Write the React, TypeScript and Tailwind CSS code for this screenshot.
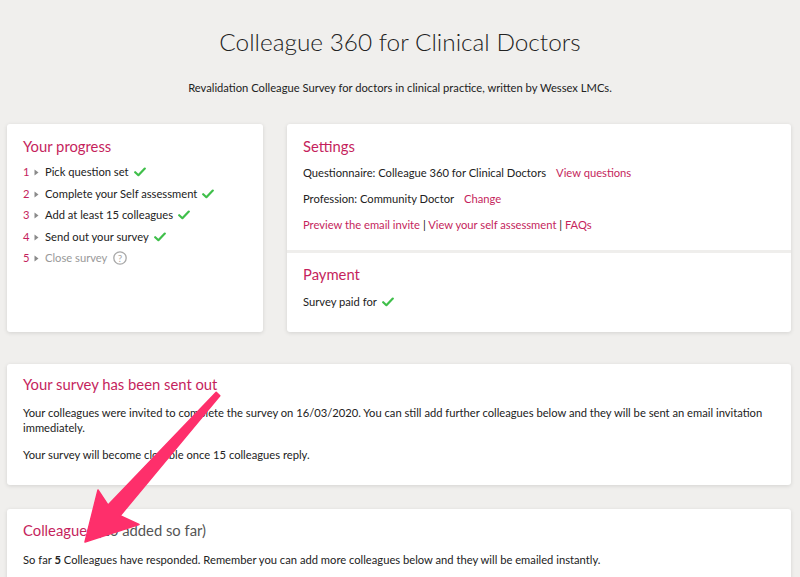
import React from "react";

const Check = () => (
  <svg width="12" height="10" viewBox="0 0 12 10" className="inline-block ml-[5px] align-[-1px]">
    <path d="M1.2 5.2 L4.4 8.2 L10.8 1.6" fill="none" stroke="#3fbf4a" strokeWidth="2.2" strokeLinecap="round" strokeLinejoin="round" />
  </svg>
);

const Tri = () => (
  <svg width="5" height="7" viewBox="0 0 5 7" className="inline-block ml-[5px] mr-[6px] align-[0px]">
    <path d="M0.5 0.5 L4.5 3.5 L0.5 6.5 Z" fill="#8a8a8a" />
  </svg>
);

const Help = () => (
  <svg width="14" height="14" viewBox="0 0 14 14" className="inline-block ml-[6px] align-[-3px]">
    <circle cx="7" cy="7" r="6.2" fill="none" stroke="#a8a8a8" strokeWidth="1.3" />
    <text x="7" y="10.6" textAnchor="middle" fontSize="10" fill="#a8a8a8" fontFamily="Lato, sans-serif">?</text>
  </svg>
);

const Step = ({ n, text, done, muted }: { n: number; text: string; done?: boolean; muted?: boolean }) => (
  <div className="leading-[21.5px] whitespace-nowrap">
    <span className="text-[#c51f5d] inline-block w-[6px]">{n}</span>
    <Tri />
    <span className={muted ? "text-[#999999]" : "text-[#222222]"}>{text}</span>
    {done && <Check />}
    {muted && <Help />}
  </div>
);

export default function App() {
  return (
    <div className="relative min-h-[577px] bg-[#f0efed] text-[#222222] overflow-hidden" style={{ fontFamily: "Lato, 'Noto Sans', sans-serif" }}>
      <div className="h-[124px] flex flex-col items-center">
        <h1 className="mt-[26px] text-[24.4px] leading-[32px] font-light text-[#222222]">Colleague 360 for Clinical Doctors</h1>
        <p className="mt-[22px] text-[11.2px] leading-[16px] text-[#222222]">
          Revalidation Colleague Survey for doctors in clinical practice, written by Wessex LMCs.
        </p>
      </div>

      <div className="pl-[7px] pr-[9px]">
        <div className="flex gap-[24px]">
          <div className="w-[256px] h-[208px] bg-white rounded-[3px] shadow-[0_1px_4px_rgba(0,0,0,0.12)] px-[16px] pt-[12px]">
            <h2 className="text-[14.8px] leading-[20px] text-[#c51f5d]">Your progress</h2>
            <div className="mt-[5px] text-[11.2px]">
              <Step n={1} text="Pick question set" done />
              <Step n={2} text="Complete your Self assessment" done />
              <Step n={3} text="Add at least 15 colleagues" done />
              <Step n={4} text="Send out your survey" done />
              <Step n={5} text="Close survey" muted />
            </div>
          </div>

          <div className="flex-1 h-[208px] bg-white rounded-[3px] shadow-[0_1px_4px_rgba(0,0,0,0.12)] flex flex-col">
            <div className="h-[129px] px-[16px] pt-[12px] border-b-[3px] border-[#efeeec]">
              <h2 className="text-[14.8px] leading-[20px] text-[#c51f5d]">Settings</h2>
              <div className="mt-[4px] text-[11.2px] leading-[26px]">
                <div>
                  Questionnaire: Colleague 360 for Clinical Doctors
                  <span className="ml-[10px] text-[#c51f5d]">View questions</span>
                </div>
                <div>
                  Profession: Community Doctor
                  <span className="ml-[10px] text-[#c51f5d]">Change</span>
                </div>
                <div>
                  <span className="text-[#c51f5d]">Preview the email invite</span>
                  <span> | </span>
                  <span className="text-[#c51f5d]">View your self assessment</span>
                  <span> | </span>
                  <span className="text-[#c51f5d]">FAQs</span>
                </div>
              </div>
            </div>
            <div className="flex-1 px-[16px] pt-[11px]">
              <h2 className="text-[14.8px] leading-[20px] text-[#c51f5d]">Payment</h2>
              <div className="mt-[5px] text-[11.2px] leading-[26px]">
                Survey paid for<Check />
              </div>
            </div>
          </div>
        </div>

        <div className="mt-[32px] bg-white rounded-[3px] shadow-[0_1px_4px_rgba(0,0,0,0.12)] px-[16px] pt-[10px] pb-[23px]">
          <h2 className="text-[14.8px] leading-[20px] text-[#c51f5d]">Your survey has been sent out</h2>
          <p className="mt-[11px] text-[11.2px] leading-[15px]">
            Your colleagues were invited to complete the survey on 16/03/2020. You can still add further colleagues below and they will be sent an email invitation immediately.
          </p>
          <p className="mt-[12px] text-[11.2px] leading-[15px]">Your survey will become closable once 15 colleagues reply.</p>
        </div>

        <div className="mt-[24px] bg-white rounded-[3px] shadow-[0_1px_4px_rgba(0,0,0,0.12)] px-[16px] pt-[11px] pb-[30px]">
          <h2 className="text-[14.8px] leading-[20px]">
            <span className="text-[#c51f5d]">Colleagues</span>
            <span className="text-[#555555]"> (20 added so far)</span>
          </h2>
          <p className="mt-[12px] text-[11.2px] leading-[15px]">
            So far <b className="font-bold">5</b> Colleagues have responded. Remember you can add more colleagues below and they will be emailed instantly.
          </p>
        </div>
      </div>

      <svg className="absolute left-0 top-0 pointer-events-none" width="800" height="577" viewBox="0 0 800 577">
        <polygon
          points="216.2,392.2 219.8,395.8 120.1,515.7 139,524.5 85,542 98,490 108.1,505.1"
          fill="#fe2f6b"
          stroke="#fe2f6b"
          strokeWidth="1.5"
          strokeLinejoin="round"
        />
      </svg>
    </div>
  );
}
